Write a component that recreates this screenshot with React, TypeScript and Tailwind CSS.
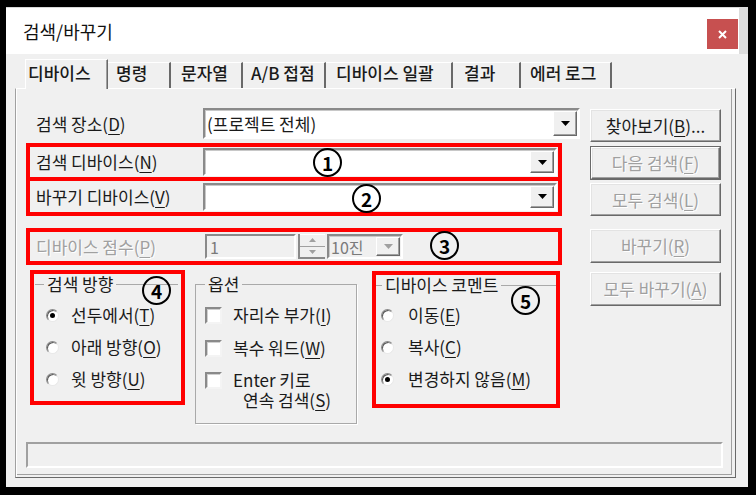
import React from "react";

const U = ({ children }: { children: React.ReactNode }) => (
  <span className="underline underline-offset-[3px] decoration-1">{children}</span>
);

const Arrow = ({ gray }: { gray?: boolean }) => (
  <span className="w-[24px] h-full flex items-center justify-center bg-[#f0f0f0] border border-t-white border-l-white border-b-[#696969] border-r-[#696969] shadow-[inset_-1px_-1px_0_#a0a0a0]">
    <svg width="9" height="5" viewBox="0 0 9 5">
      <path d="M0 0h9L4.5 5z" fill={gray ? "#a0a0a0" : "#000"} />
    </svg>
  </span>
);

const Combo = ({ className, text, disabled }: { className: string; text?: string; disabled?: boolean }) => (
  <div
    className={`flex border-2 border-t-[#8a8a8a] border-l-[#8a8a8a] border-b-white border-r-white shadow-[inset_1px_1px_0_#c8c8c8] ${
      disabled ? "bg-[#f0f0f0] text-[#7a7a7a]" : "bg-white text-[#1a1a1a]"
    } ${className}`}
  >
    <div className="flex-1 flex items-center pl-[2px] overflow-hidden whitespace-nowrap">{text}</div>
    <div className="p-[1px] flex">
      <Arrow gray={disabled} />
    </div>
  </div>
);

const Btn = ({ children, def, className }: { children: React.ReactNode; def?: boolean; className: string }) => (
  <div className={`w-[131px] ${def ? "border border-[#696969]" : ""} ${className}`}>
    <div className="w-full h-full flex items-center justify-center bg-[#f0f0f0] border border-t-white border-l-white border-b-[#696969] border-r-[#696969] shadow-[inset_-1px_-1px_0_#a0a0a0,inset_1px_1px_0_#e3e3e3] text-[#a0a0a0] [text-shadow:1px_1px_0_#fff]">
      {children}
    </div>
  </div>
);

const Radio = ({ checked }: { checked?: boolean }) => (
  <span className="w-[13px] h-[13px] rounded-full bg-white border border-t-[#8a8a8a] border-l-[#8a8a8a] border-b-[#e8e8e8] border-r-[#e8e8e8] shadow-[inset_1px_1px_0_#5a5a5a] flex items-center justify-center shrink-0">
    {checked && <span className="w-[5px] h-[5px] rounded-full bg-black" />}
  </span>
);

const Check = () => (
  <span className="w-[17px] h-[17px] bg-white border-2 border-t-[#8a8a8a] border-l-[#8a8a8a] border-b-[#f4f4f4] border-r-[#f4f4f4] shadow-[inset_1px_1px_0_#d0d0d0] shrink-0" />
);

const Num = ({ n, className }: { n: number; className: string }) => (
  <span
    className={`absolute w-[29px] h-[29px] rounded-full border-[2.5px] border-black flex items-center justify-center text-[19px] font-bold leading-none text-black ${className}`}
  >
    {n}
  </span>
);

const tabs = [
  { label: "명령", w: "w-[63px]", pl: "pl-[8px]" },
  { label: "문자열", w: "w-[72px]", pl: "pl-[10px]" },
  { label: "A/B 접점", w: "w-[83px]", pl: "pl-[8px]" },
  { label: "디바이스 일괄", w: "w-[127px]", pl: "pl-[10px]" },
  { label: "결과", w: "w-[68px]", pl: "pl-[11px]" },
  { label: "에러 로그", w: "w-[91px]", pl: "pl-[9px]" },
];

export default function App() {
  return (
    <div className="w-[756px] h-[495px] bg-black overflow-hidden font-['Noto_Sans_CJK_KR','Noto_Sans',sans-serif] text-[17px] leading-[20px] text-[#1a1a1a]">
      <div className="ml-[6px] mt-[7px] w-[742px] h-[480px] flex flex-col">
        {/* title bar */}
        <div className="h-[47px] flex">
          <div className="flex-1 bg-white flex items-start justify-between border-t border-[#d8d8d8]">
            <span className="pl-[17px] mt-[11px] text-[18px] leading-[24px] text-[#111]">검색/바꾸기</span>
            <div className="mt-[11px] mr-[1px] w-[31px] h-[30px] bg-[#c75050] flex items-center justify-center">
              <svg width="9" height="9" viewBox="0 0 9 9">
                <path d="M1 1l7 7M8 1L1 8" stroke="#fff" strokeWidth="2" />
              </svg>
            </div>
          </div>
          <div className="w-[9px] bg-[#dcdcdc]" />
        </div>

        {/* body */}
        <div className="flex-1 bg-[#f0f0f0] pl-[9px] pt-[5px] flex flex-col">
          <div className="ml-[10px] h-[30px] flex items-end relative z-10 -mb-[1px] font-medium">
            <div className="w-[83px] h-[30px] bg-[#f0f0f0] border-l border-t border-white border-r border-r-[#696969] shadow-[inset_-1px_0_0_#a0a0a0] pl-[2px] pt-[3px]">
              디바이스
            </div>
            {tabs.map((t) => (
              <div
                key={t.label}
                className={`${t.w} ${t.pl} h-[26px] mb-[1px] bg-[#f0f0f0] border-t border-white border-r-2 border-r-[#696969] whitespace-nowrap`}
              >
                {t.label}
              </div>
            ))}
          </div>

          <div className="w-[721px] h-[390px] border border-t-white border-l-[#a0a0a0] border-b-[#696969] border-r-[#696969] shadow-[inset_1px_0_0_#fff,inset_-3px_-2px_0_#f0f0f0,inset_-4px_-3px_0_#a0a0a0] pl-[10px] pt-[19px] flex flex-col">
            <div className="flex">
              {/* left column */}
              <div className="w-[554px] flex flex-col">
                <div className="h-[31px] flex items-center">
                  <span className="w-[177px] pl-[10px]">
                    검색 장소(<U>D</U>)
                  </span>
                  <Combo className="w-[377px] h-[31px]" text="(프로젝트 전체)" />
                </div>

                <div className="relative mt-[4px] w-[536px] h-[38px] border-4 border-[#ff0000] flex items-center">
                  <span className="w-[173px] pl-[6px]">
                    검색 디바이스(<U>N</U>)
                  </span>
                  <Combo className="w-[354px] h-[28px]" />
                  <Num n={1} className="left-[283px] top-[1px]" />
                </div>
                <div className="relative w-[536px] h-[35px] border-4 border-t-0 border-[#ff0000] flex items-center">
                  <span className="w-[173px] pl-[6px]">
                    바꾸기 디바이스(<U>V</U>)
                  </span>
                  <Combo className="w-[354px] h-[28px]" />
                  <Num n={2} className="left-[322px] top-[3px]" />
                </div>

                <div className="relative mt-[12px] w-[536px] h-[37px] border-4 border-[#ff0000] flex items-center text-[#a0a0a0]">
                  <span className="w-[175px] pl-[6px] [text-shadow:1px_1px_0_#fff]">
                    디바이스 점수(<U>P</U>)
                  </span>
                  <div className="w-[91px] h-[25px] bg-[#f0f0f0] border-2 border-t-[#8a8a8a] border-l-[#8a8a8a] border-b-white border-r-white flex items-center pl-[3px] text-[#7a7a7a] text-[16px]">
                    1
                  </div>
                  <div className="ml-[2px] w-[27px] h-[25px] flex flex-col border-l-2 border-[#8a8a8a]">
                    <span className="flex-1 flex items-center justify-center border-b border-[#a0a0a0] border-t border-t-white">
                      <svg width="7" height="4" viewBox="0 0 7 4">
                        <path d="M0 4h7L3.5 0z" fill="#a0a0a0" />
                      </svg>
                    </span>
                    <span className="flex-1 flex items-center justify-center border-b-2 border-[#8a8a8a]">
                      <svg width="7" height="4" viewBox="0 0 7 4">
                        <path d="M0 0h7L3.5 4z" fill="#a0a0a0" />
                      </svg>
                    </span>
                  </div>
                  <Combo className="ml-[2px] w-[76px] h-[25px] text-[16px]" text="10진" disabled />
                  <Num n={3} className="left-[400px] top-[-1px]" />
                </div>

                <div className="mt-[5px] flex items-start">
                  <div className="relative ml-[4px] w-[155px] h-[135px] border-4 border-[#ff0000]">
                    <fieldset className="w-[143px] h-[127px] ml-[1px] border-0 border-t border-[#a9a9a9]">
                      <legend className="ml-[9px] px-[3px] leading-[20px]">검색 방향</legend>
                      <div className="pt-[11px] pl-[11px] flex flex-col gap-[12px]">
                        <div className="flex items-center gap-[12px]">
                          <Radio checked />
                          <span>
                            선두에서(<U>T</U>)
                          </span>
                        </div>
                        <div className="flex items-center gap-[12px]">
                          <Radio />
                          <span>
                            아래 방향(<U>O</U>)
                          </span>
                        </div>
                        <div className="flex items-center gap-[12px]">
                          <Radio />
                          <span>
                            윗 방향(<U>U</U>)
                          </span>
                        </div>
                      </div>
                    </fieldset>
                    <Num n={4} className="left-[108px] top-[2px]" />
                  </div>

                  <fieldset className="ml-[10px] mt-[4px] w-[162px] h-[150px] border border-[#a9a9a9] shadow-[1px_1px_0_#fff]">
                    <legend className="ml-[9px] px-[3px] leading-[20px]">옵션</legend>
                    <div className="pt-[11px] pl-[9px] flex flex-col gap-[13px]">
                      <div className="flex items-center gap-[11px]">
                        <Check />
                        <span>
                          자리수 부가(<U>I</U>)
                        </span>
                      </div>
                      <div className="flex items-center gap-[11px]">
                        <Check />
                        <span>
                          복수 워드(<U>W</U>)
                        </span>
                      </div>
                      <div className="flex items-start gap-[11px]">
                        <span className="mt-[1px] flex">
                          <Check />
                        </span>
                        <span className="flex flex-col leading-[20px] -mt-[1px]">
                          <span>Enter 키로</span>
                          <span className="pl-[10px]">
                            연속 검색(<U>S</U>)
                          </span>
                        </span>
                      </div>
                    </div>
                  </fieldset>

                  <div className="relative ml-[15px] mt-[1px] w-[188px] h-[137px] border-4 border-[#ff0000]">
                    <fieldset className="w-[180px] h-[129px] border-0 border-t border-[#a9a9a9]">
                      <legend className="ml-[6px] px-[3px] leading-[20px]">디바이스 코멘트</legend>
                      <div className="pt-[10px] pl-[5px] flex flex-col gap-[12px]">
                        <div className="flex items-center gap-[14px]">
                          <Radio />
                          <span>
                            이동(<U>E</U>)
                          </span>
                        </div>
                        <div className="flex items-center gap-[14px]">
                          <Radio />
                          <span>
                            복사(<U>C</U>)
                          </span>
                        </div>
                        <div className="flex items-center gap-[14px]">
                          <Radio checked />
                          <span>
                            변경하지 않음(<U>M</U>)
                          </span>
                        </div>
                      </div>
                    </fieldset>
                    <Num n={5} className="left-[135px] top-[11px]" />
                  </div>
                </div>
              </div>

              {/* right column */}
              <div className="ml-[10px] flex flex-col">
                <div className="mt-[1px] w-[131px] h-[33px] flex items-center justify-center bg-[#f0f0f0] border border-t-white border-l-white border-b-[#696969] border-r-[#696969] shadow-[inset_-1px_-1px_0_#a0a0a0,inset_1px_1px_0_#e3e3e3]">
                  찾아보기(<U>B</U>)...
                </div>
                <Btn def className="mt-[4px] h-[34px]">
                  다음 검색(<U>F</U>)
                </Btn>
                <Btn className="mt-[3px] h-[33px]">
                  모두 검색(<U>L</U>)
                </Btn>
                <Btn className="mt-[13px] h-[34px]">
                  바꾸기(<U>R</U>)
                </Btn>
                <Btn className="mt-[9px] h-[34px]">
                  모두 바꾸기(<U>A</U>)
                </Btn>
              </div>
            </div>

            <div className="mt-[18px] w-[697px] h-[26px] border-2 border-t-[#a0a0a0] border-l-[#a0a0a0] border-b-white border-r-white" />
          </div>
        </div>
      </div>
    </div>
  );
}
